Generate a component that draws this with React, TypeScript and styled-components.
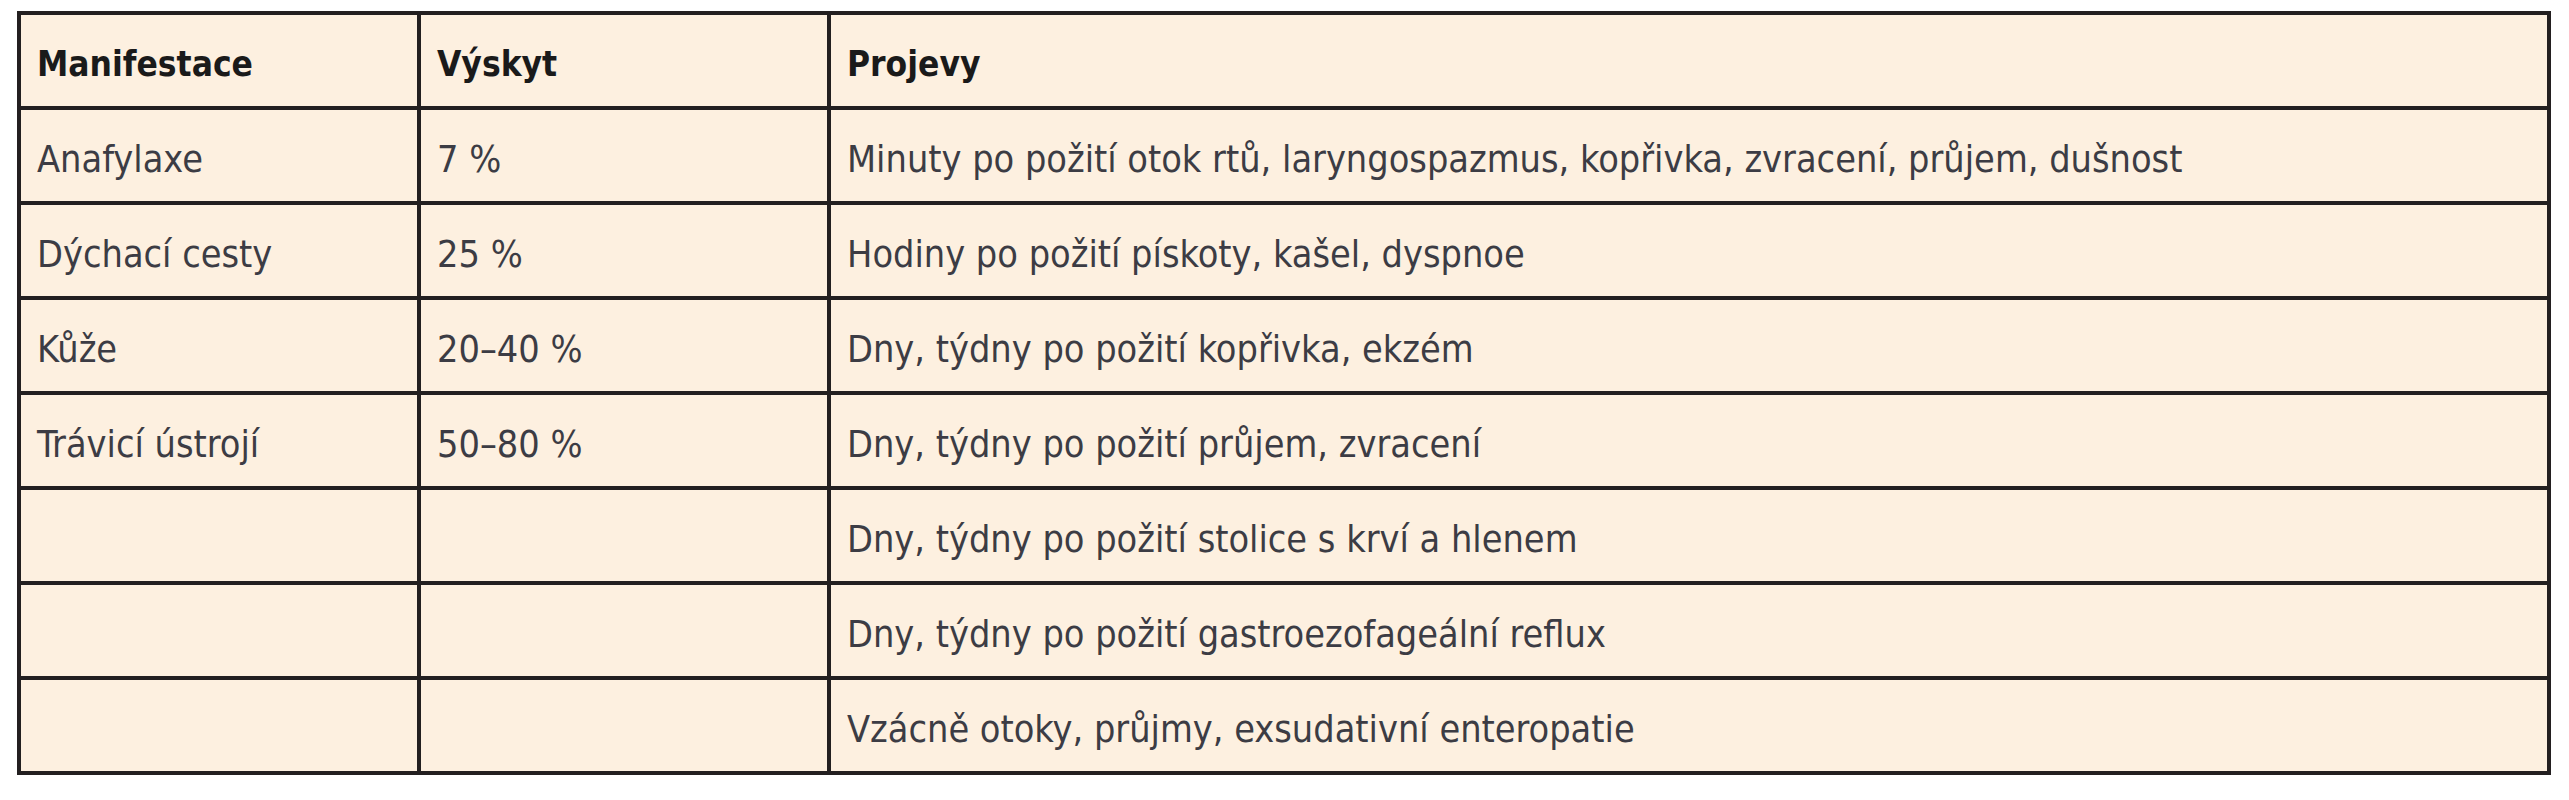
import styled, { createGlobalStyle } from "styled-components";

const GlobalStyle = createGlobalStyle`
    body {
        margin: 0;
        background: #ffffff;
        font-family: "DejaVu Sans Condensed", "Liberation Sans Narrow", "Liberation Sans", sans-serif;
    }
`;

interface Row {
    manifestation: string;
    occurrence: string;
    signs: string;
}

const rows: Row[] = [
    {
        manifestation: "Anafylaxe",
        occurrence: "7 %",
        signs: "Minuty po požití otok rtů, laryngospazmus, kopřivka, zvracení, průjem, dušnost",
    },
    {
        manifestation: "Dýchací cesty",
        occurrence: "25 %",
        signs: "Hodiny po požití pískoty, kašel, dyspnoe",
    },
    {
        manifestation: "Kůže",
        occurrence: "20–40 %",
        signs: "Dny, týdny po požití kopřivka, ekzém",
    },
    {
        manifestation: "Trávicí ústrojí",
        occurrence: "50–80 %",
        signs: "Dny, týdny po požití průjem, zvracení",
    },
    { manifestation: "", occurrence: "", signs: "Dny, týdny po požití stolice s krví a hlenem" },
    { manifestation: "", occurrence: "", signs: "Dny, týdny po požití gastroezofageální reflux" },
    { manifestation: "", occurrence: "", signs: "Vzácně otoky, průjmy, exsudativní enteropatie" },
];

function App() {
    return (
        <>
            <GlobalStyle />
            <Table role="table">
                <Cell role="columnheader" head>Manifestace</Cell>
                <Cell role="columnheader" head>Výskyt</Cell>
                <Cell role="columnheader" head>Projevy</Cell>
                {rows.map((row, i) => (
                    <Line role="row" key={i}>
                        <Cell role="cell">{row.manifestation}</Cell>
                        <Cell role="cell">{row.occurrence}</Cell>
                        <Cell role="cell">{row.signs}</Cell>
                    </Line>
                ))}
            </Table>
        </>
    );
}

const Table = styled.div`
    margin: 11px 18px 0 17px;
    display: grid;
    grid-template-columns: 396px 406px 1fr;
    grid-auto-rows: 91px;
    gap: 4px;
    padding: 4px;
    background-color: #231f20;
`;
const Line = styled.div`
    display: contents;
`;
const Cell = styled.div<{ head?: boolean }>`
    display: flex;
    align-items: center;
    padding: 6px 16px 0 16px;
    background-color: #fdf0e0;
    font-size: ${(props) => (props.head ? "35px" : "37.5px")};
    font-weight: ${(props) => (props.head ? 700 : 400)};
    color: ${(props) => (props.head ? "#1a1a1a" : "#3c3c44")};
    white-space: nowrap;
`;

export default App;
